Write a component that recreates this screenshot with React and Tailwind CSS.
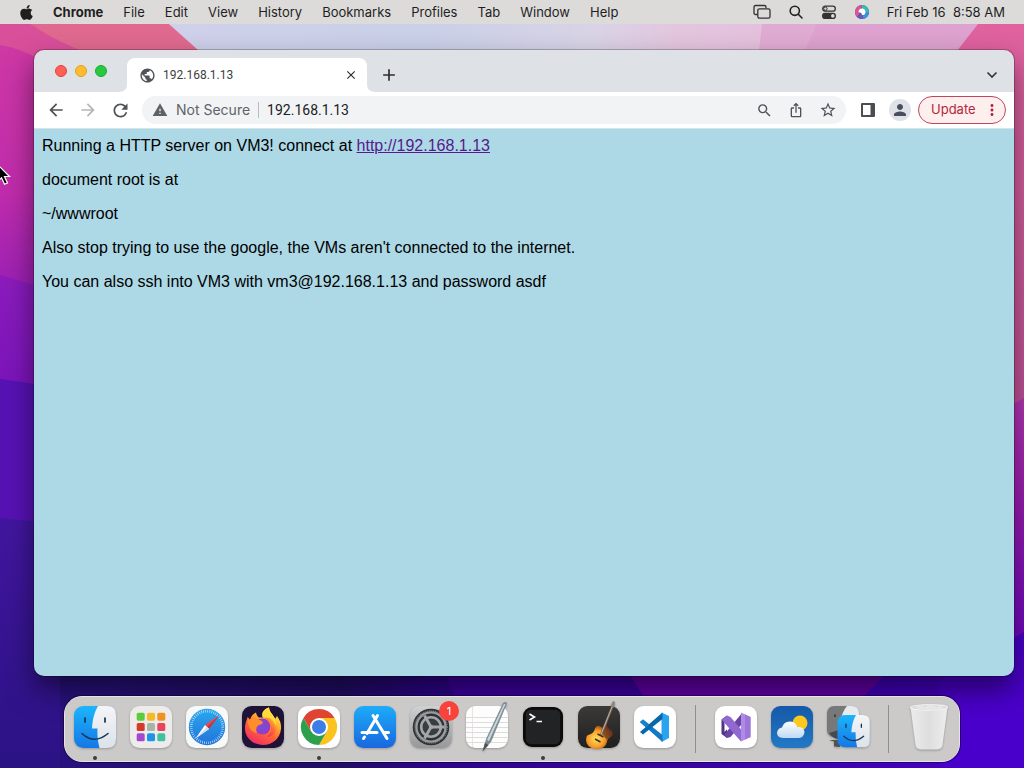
import React from "react";
import { FaApple } from "react-icons/fa";
import {
  MdPublic,
  MdArrowBack,
  MdArrowForward,
  MdRefresh,
  MdWarning,
  MdSearch,
  MdIosShare,
  MdStarBorder,
  MdPerson,
  MdMoreVert,
  MdClose,
  MdAdd,
} from "react-icons/md";

const MENUS = ["File", "Edit", "View", "History", "Bookmarks", "Profiles", "Tab", "Window", "Help"];

function Wallpaper() {
  return (
    <svg className="absolute inset-0 h-full w-full" viewBox="0 0 1024 768" preserveAspectRatio="none" aria-hidden="true">
      <defs>
        <linearGradient id="wBase" x1="0" y1="0" x2="1" y2="0">
          <stop offset="0" stopColor="#2a1284" />
          <stop offset="0.33" stopColor="#210d66" />
          <stop offset="0.42" stopColor="#2d0489" />
          <stop offset="1" stopColor="#4700c8" />
        </linearGradient>
        <linearGradient id="wSky" x1="0" y1="0" x2="1" y2="0">
          <stop offset="0.17" stopColor="#cfd0ea" />
          <stop offset="0.42" stopColor="#c9d0e8" />
          <stop offset="0.58" stopColor="#d9d3e6" />
          <stop offset="0.66" stopColor="#e3c6de" />
          <stop offset="0.8" stopColor="#e5bcdc" />
        </linearGradient>
        <linearGradient id="wLeft" x1="0" y1="40" x2="0" y2="290" gradientUnits="userSpaceOnUse">
          <stop offset="0" stopColor="#cf38a4" />
          <stop offset="0.6" stopColor="#c02cac" />
          <stop offset="1" stopColor="#9a20b4" />
        </linearGradient>
        <linearGradient id="wRight" x1="0" y1="24" x2="0" y2="410" gradientUnits="userSpaceOnUse">
          <stop offset="0" stopColor="#e0629f" />
          <stop offset="0.5" stopColor="#d25c9b" />
          <stop offset="1" stopColor="#c05299" />
        </linearGradient>
        <linearGradient id="wRight2" x1="0" y1="400" x2="0" y2="650" gradientUnits="userSpaceOnUse">
          <stop offset="0" stopColor="#b636b4" />
          <stop offset="0.4" stopColor="#9c1cb4" />
          <stop offset="1" stopColor="#6c06c4" />
        </linearGradient>
        <linearGradient id="wPurple" x1="0" y1="270" x2="0" y2="390" gradientUnits="userSpaceOnUse">
          <stop offset="0" stopColor="#8c1cbc" />
          <stop offset="1" stopColor="#7a14ba" />
        </linearGradient>
        <linearGradient id="wDeep" x1="0" y1="518" x2="0" y2="768" gradientUnits="userSpaceOnUse">
          <stop offset="0" stopColor="#42169f" />
          <stop offset="1" stopColor="#2a1284" />
        </linearGradient>
        <linearGradient id="wPink" x1="0" y1="0" x2="0.2" y2="0">
          <stop offset="0" stopColor="#d5539f" />
          <stop offset="1" stopColor="#e0698f" />
        </linearGradient>
      </defs>
      <rect width="1024" height="768" fill="url(#wBase)" />
      <rect width="1024" height="200" fill="url(#wSky)" />
      <path d="M0 0H142L198 50V200H0Z" fill="url(#wPink)" />
      <path d="M0 24H30Q60 44 96 56V200H0Z" fill="#d94f9a" />
      <path d="M0 45Q20 48 40 60V300H0Z" fill="url(#wLeft)" />
      <path d="M0 275L120 310V400H0Z" fill="url(#wPurple)" />
      <path d="M0 379L120 396V530H0Z" fill="#5712b4" />
      <path d="M0 518L60 524V768H0Z" fill="url(#wDeep)" />
      <path d="M762 24L758 60H900V24Z" fill="#e0abd3" />
      <path d="M817 24L800 60H1024V24Z" fill="#dda2cf" />
      <path d="M978 24L950 60V420H1024V24Z" fill="url(#wRight)" />
      <path d="M950 440L1024 398V660H950Z" fill="url(#wRight2)" />
      <path d="M940 680L1024 632V768H940Z" fill="#4a00cb" />
      <path d="M440 660H620L650 710H460Z" fill="#3d00a0" />
      <path d="M620 660H900L860 700H646Z" fill="#6300a8" />
    </svg>
  );
}

function MenuBar() {
  return (
    <header className="relative z-10 flex h-6 items-center bg-[#dcdbda] pr-[19px] pl-[18px] font-[Inter,sans-serif] text-[13px] leading-4 text-[#1f1f1f]">
      <nav className="flex items-center gap-5" aria-label="Menu bar">
        <button aria-label="Apple menu"><FaApple size={17} className="block" /></button>
        <button className="-ml-0.5 font-bold">Chrome</button>
        {MENUS.map((m) => (
          <button key={m}>{m}</button>
        ))}
      </nav>
      <div className="ml-auto flex items-center gap-[17px]">
        <button aria-label="Screen mirroring">
          <svg className="block" width="18" height="16" viewBox="0 0 18 16" fill="none" stroke="#333" strokeWidth="1.3">
            <path d="M4.500 10.500H2.600Q1 10.500 1 9V3Q1 1.500 2.600 1.500H11.500Q13 1.500 13 3V4.200" />
            <rect x="4.800" y="4.800" width="12.200" height="9.400" rx="1.600" />
          </svg>
        </button>
        <button aria-label="Search">
          <svg className="block" width="16" height="16" viewBox="0 0 16 16" fill="none" stroke="#222" strokeWidth="1.600" strokeLinecap="round">
            <circle cx="6.800" cy="6.800" r="4.600" /><path d="M10.300 10.300L14 14" />
          </svg>
        </button>
        <button aria-label="Control center">
          <svg className="block" width="16" height="16" viewBox="0 0 16 16">
            <rect x="1.700" y="2.200" width="12.600" height="5" rx="2.500" fill="none" stroke="#333" strokeWidth="1.300" />
            <circle cx="4.400" cy="4.700" r="1.700" fill="none" stroke="#333" />
            <rect x="1" y="8.800" width="14" height="6.200" rx="3.100" fill="#333" />
            <circle cx="11.800" cy="11.900" r="1.800" fill="#ddd" />
          </svg>
        </button>
        <button aria-label="Siri">
          <svg className="block" width="16" height="16" viewBox="0 0 16 16">
            <circle cx="8" cy="8" r="7" fill="#3d4a72" />
            <path d="M8 1A7 7 0 0 0 1 8Q1 11 3 13L7 8Z" fill="#d9559b" />
            <path d="M8 1A7 7 0 0 1 15 8L8 9Z" fill="#35bcae" />
            <path d="M15 8A7 7 0 0 1 9 15L8 8Z" fill="#3f8fe0" />
            <path d="M3 13A7 7 0 0 0 9 15L8 8Z" fill="#7055bd" />
            <path d="M4.500 8Q5 4 8.500 4.500Q11.500 5 11.500 8.500Q11 11.500 8 11Q8 8.500 4.500 8Z" fill="#fff" />
          </svg>
        </button>
        <button className="whitespace-pre">Fri Feb 16{"  "}8:58 AM</button>
      </div>
    </header>
  );
}

function TabStrip() {
  return (
    <div className="flex h-[42px] items-end bg-[#dee1e6] pr-3 pl-[21px]">
      <div className="flex gap-2 self-start pt-[15px] pr-5">
        <button aria-label="Close window" className="size-3 rounded-full border border-[#e0443e] bg-[#ff5f57]" />
        <button aria-label="Minimize window" className="size-3 rounded-full border border-[#dea123] bg-[#febc2e]" />
        <button aria-label="Zoom window" className="size-3 rounded-full border border-[#1aab29] bg-[#28c840]" />
      </div>
      <div className="relative flex h-[34px] w-60 items-center rounded-t-lg bg-white px-3">
        <svg className="absolute bottom-0 -left-2 size-2" viewBox="0 0 8 8"><path d="M8 0V8H0Q8 8 8 0Z" fill="#fff" /></svg>
        <svg className="absolute -right-2 bottom-0 size-2" viewBox="0 0 8 8"><path d="M0 0V8H8Q0 8 0 0Z" fill="#fff" /></svg>
        <MdPublic size={17} className="shrink-0 text-[#505357]" />
        <span className="ml-[7px] flex-1 font-[Roboto,sans-serif] text-xs text-[#3c4043]">192.168.1.13</span>
        <button aria-label="Close tab" className="-mr-1 flex size-4 items-center justify-center">
          <MdClose size={14} className="text-[#2c2e31]" />
        </button>
      </div>
      <button aria-label="New tab" className="ml-3 flex h-[34px] w-5 items-center justify-center">
        <MdAdd size={20} className="shrink-0 text-[#2c2e31]" />
      </button>
      <button aria-label="Search tabs" className="ml-auto flex h-[34px] w-5 items-center justify-center">
        <svg width="12" height="8" viewBox="0 0 12 8" fill="none" stroke="#36383b" strokeWidth="1.700"><path d="M1.500 1.500L6 6L10.500 1.500" /></svg>
      </button>
    </div>
  );
}

const slot = "flex h-7 w-8 shrink-0 items-center justify-center";

function Toolbar() {
  return (
    <div className="flex h-[37px] items-center border-b border-[#d5e4ea] bg-white pr-2 pl-1.5 text-[#4f5357]">
      <button aria-label="Back" className={slot}><MdArrowBack size={20} /></button>
      <button aria-label="Forward" className={slot}><MdArrowForward size={20} className="text-[#b4b6b9]" /></button>
      <button aria-label="Reload" className={slot}><MdRefresh size={21} /></button>
      <div className="ml-1.5 flex h-7 flex-1 items-center rounded-full bg-[#f1f3f4] pr-0.5 pl-2.5 text-sm">
        <button className="flex items-center gap-2 text-[#5f6368]">
          <MdWarning size={16} />
          Not Secure
        </button>
        <span className="mr-2 ml-2 h-4 w-px bg-[#b9bcc0]" />
        <input
          aria-label="Address"
          defaultValue="192.168.1.13"
          className="min-w-0 flex-1 bg-transparent font-[Roboto,sans-serif] text-[#202124] outline-none"
        />
        <button aria-label="Zoom" className={slot}><MdSearch size={17} /></button>
        <button aria-label="Share" className={slot}><MdIosShare size={16} /></button>
        <button aria-label="Bookmark" className={slot}><MdStarBorder size={18} /></button>
      </div>
      <button aria-label="Side panel" className={slot + " ml-1.5"}>
        <svg width="14" height="14" viewBox="0 0 14 14"><rect width="14" height="14" rx="1" fill="#4a4d51" /><rect x="2" y="2" width="7.500" height="10" fill="#fff" /></svg>
      </button>
      <button aria-label="Profile" className={slot}>
        <span className="flex size-[22px] items-center justify-center rounded-full bg-[#dee1e6]"><MdPerson size={18} className="text-[#494e5f]" /></span>
      </button>
      <button className="ml-0.5 flex h-7 w-[88px] items-center justify-between rounded-full border border-[#c0455a] bg-[#fdefee] pr-1 pl-3 text-[13px] text-[#b5263a]">
        Update
        <MdMoreVert size={18} />
      </button>
    </div>
  );
}

function BrowserWindow() {
  return (
    <section className="flex flex-1 flex-col overflow-hidden rounded-[10px] font-[Inter,sans-serif] shadow-[0_0_0_1px_rgba(0,0,0,0.22),0_14px_28px_rgba(0,0,0,0.5)]">
      <TabStrip />
      <Toolbar />
      <article className="flex flex-1 flex-col gap-4 bg-[#add8e6] p-2 font-['Liberation_Sans',sans-serif] text-base leading-[18px] text-black">
        <p>
          Running a HTTP server on VM3! connect at{" "}
          <a href="http://192.168.1.13" className="text-[#551a8b] underline">http://192.168.1.13</a>
        </p>
        <p>document root is at</p>
        <p>~/wwwroot</p>
        <p>Also stop trying to use the google, the VMs aren't connected to the internet.</p>
        <p>You can also ssh into VM3 with vm3@192.168.1.13 and password asdf</p>
      </article>
    </section>
  );
}

function Art({ children }) {
  return (
    <svg className="block size-[42px] overflow-visible drop-shadow-[0_1px_1px_rgba(0,0,0,0.25)]" viewBox="0 0 42 42" aria-hidden="true">
      {children}
    </svg>
  );
}

function Grad({ id, from, to }) {
  return (
    <linearGradient id={id} x1="0" y1="0" x2="0" y2="1">
      <stop offset="0" stopColor={from} />
      <stop offset="1" stopColor={to} />
    </linearGradient>
  );
}

function Face() {
  return (
    <g>
      <path d="M24 0C20 7 18.500 14 18 22.500H23.500Q23 33 25.500 42H33Q42 42 42 33V9Q42 0 33 0Z" fill="url(#fWhite)" />
      <path d="M11 12V16M31 12V16" stroke="#1b3246" strokeWidth="1.700" strokeLinecap="round" />
      <path d="M8 27.500Q20 39 34 27.500" fill="none" stroke="#173654" strokeWidth="1.600" strokeLinecap="round" />
    </g>
  );
}

function Finder() {
  return (
    <Art>
      <defs><Grad id="fBlue" from="#1cb5fb" to="#1478e6" /><Grad id="fWhite" from="#f4f5f8" to="#dce2ea" /></defs>
      <rect width="42" height="42" rx="9.500" fill="url(#fBlue)" />
      <Face />
    </Art>
  );
}

const PADS = ["#5ecb3a", "#f6b928", "#f0921f", "#d63a2b", "#a5b5a9", "#e9435f", "#a348cf", "#1f93e8", "#40c1a0"];

function Launchpad() {
  return (
    <Art>
      <rect width="42" height="42" rx="9.500" fill="#eeeceb" />
      {PADS.map((c, i) => (
        <rect key={c} x={6.700 + (i % 3) * 10.300} y={6.700 + Math.floor(i / 3) * 10.300} width="8" height="8" rx="1.600" fill={c} />
      ))}
    </Art>
  );
}

function Safari() {
  return (
    <Art>
      <defs><Grad id="saf" from="#2aa8f0" to="#2273d8" /></defs>
      <rect width="42" height="42" rx="9.500" fill="#f7f8f8" />
      <circle cx="21" cy="21" r="18.200" fill="url(#saf)" />
      <circle cx="21" cy="21" r="15.800" fill="none" stroke="#d9eefb" strokeWidth="2.600" strokeDasharray="0.600 1.468" />
      <path d="M33 9.500L23 23L19 19Z" fill="#ec4a45" />
      <path d="M33 9.500L23 23L21 21Z" fill="#c4363a" />
      <path d="M9.500 32.500L19 19L23 23Z" fill="#fff" />
      <path d="M9.500 32.500L21 21L23 23Z" fill="#d3dce4" />
    </Art>
  );
}

function Firefox() {
  return (
    <Art>
      <defs>
        <linearGradient id="ffx" x1="0.8" y1="0" x2="0.25" y2="1">
          <stop offset="0" stopColor="#fff04a" /><stop offset="0.3" stopColor="#ffbd2e" />
          <stop offset="0.6" stopColor="#ff6636" /><stop offset="1" stopColor="#ef2a68" />
        </linearGradient>
        <radialGradient id="ffp"><stop offset="0" stopColor="#754cdb" /><stop offset="1" stopColor="#993cc4" /></radialGradient>
      </defs>
      <rect width="42" height="42" rx="9.500" fill="#1e1236" />
      <path d="M21 39C11 39 3 32 3 22.500C3 17 5 14 5.500 11C7 12 7.500 13 8 14C9 10 11 8 14 6.500C14.500 9 15.500 10.500 17 11.500H21C19 7 22 3 27 1.500C27 6 31 8 33 13L35 10C38 14 39.500 18 39 23C38 33 30 39 21 39Z" fill="url(#ffx)" />
      <circle cx="20.500" cy="20.500" r="8" fill="url(#ffp)" />
      <path d="M5.500 15Q10 11 16 13.500Q20 14 21 17Q18 19 16 19.500Q13 22 15 27Q8 27 5.500 15Z" fill="#ff8d2c" />
      <path d="M27 1.500C27 8 37 11 34 24Q32 31 25 31Q31 25 28 18Q26 13 21 11.500C19 7 22 3 27 1.500Z" fill="url(#ffx)" />
      <path d="M27 1.500C27 8 35 10 34 20Q31 13 27 12Q24 11.500 21 11.500C19 7 22 3 27 1.500Z" fill="#ffdc3c" />
    </Art>
  );
}

function Chrome() {
  return (
    <Art>
      <rect width="42" height="42" rx="9.500" fill="#fff" />
      <path d="M5.400 12A18 18 0 0 1 36.600 12H21L13.200 25.500Z" fill="#df4332" />
      <path d="M36.600 12A18 18 0 0 1 21 39L28.800 25.500L21 12Z" fill="#fcc31e" />
      <path d="M21 39A18 18 0 0 1 5.400 12L13.200 25.500H28.800Z" fill="#2da04c" />
      <circle cx="21" cy="21" r="9" fill="#fff" />
      <circle cx="21" cy="21" r="7" fill="#3c7de6" />
    </Art>
  );
}

function AppStore() {
  return (
    <Art>
      <defs><Grad id="aps" from="#1cacf9" to="#1a67df" /></defs>
      <rect width="42" height="42" rx="9.500" fill="url(#aps)" />
      <g stroke="#fff" strokeWidth="3" strokeLinecap="round">
        <path d="M23.500 9.500L13 27.500M19 9.500L33 32.500M8 26.500H23M30 26.500H34.500M10.500 31L9.500 32.500" />
      </g>
    </Art>
  );
}

function Settings() {
  return (
    <Art>
      <defs><Grad id="set" from="#cdd2d4" to="#96989a" /></defs>
      <rect width="42" height="42" rx="9.500" fill="url(#set)" />
      <circle cx="21" cy="21" r="18.300" fill="#2f3234" />
      <circle cx="21" cy="21" r="14.600" fill="none" stroke="#989c9e" strokeWidth="2.400" />
      <circle cx="21" cy="21" r="16.200" fill="none" stroke="#7e8284" strokeWidth="1.200" strokeDasharray="1 1" />
      <circle cx="21" cy="21" r="9.800" fill="#3a3d3f" stroke="#a3a7a9" strokeWidth="2.600" />
      <path d="M21 21L14.500 9.500M21 21H34.500M21 21L14.500 32.500" stroke="#a3a7a9" strokeWidth="2.800" />
      <circle cx="21" cy="21" r="2.200" fill="#a3a7a9" />
    </Art>
  );
}

function TextEdit() {
  return (
    <Art>
      <rect width="42" height="42" rx="9.500" fill="#fdfdfd" />
      <path d="M0 11.500H42M0 16.500H42M0 21.500H42M0 26.500H42M0 31.500H42M1 36.500H41" stroke="#d3d3d6" strokeWidth="0.800" />
      <path d="M6.500 1V41" stroke="#e4d5d0" strokeWidth="0.700" />
      <path d="M37 -3Q40 -5 41 -2.500L25 36L16.500 45.500L20 33Z" fill="#7d8d94" />
      <path d="M38 -2L39.500 -2L23 35L21 34Z" fill="#ccd7da" />
      <path d="M19 37L22.500 39L16.500 45.500Z" fill="#4d5254" />
    </Art>
  );
}

function Terminal() {
  return (
    <Art>
      <rect x="1" y="1" width="40" height="40" rx="9" fill="#0b0b0c" />
      <rect x="3.800" y="3.800" width="34.400" height="34.400" rx="5" fill="#222324" />
      <path d="M7.500 8L12.500 11L7.500 14M14.500 15.500H20" fill="none" stroke="#fff" strokeWidth="1.600" />
    </Art>
  );
}

function GarageBand() {
  return (
    <Art>
      <defs>
        <radialGradient id="gb" cx="0.38" cy="0.6" r="0.6"><stop offset="0" stopColor="#ffe25a" /><stop offset="0.55" stopColor="#f59a26" /><stop offset="1" stopColor="#7a2a12" /></radialGradient>
        <Grad id="gbt" from="#3b3a39" to="#201f1f" />
      </defs>
      <rect width="42" height="42" rx="9.500" fill="url(#gbt)" />
      <path d="M10 29Q15 28 16.500 24Q18 19 21.500 20L25 22Q26 17 29 17.500Q28.500 21 31 23Q36 26 34 30Q29 32 29 36Q27 44 17 43Q8 41 8 34Q8 30 10 29Z" fill="url(#gb)" />
      <path d="M25 22Q26 17 29 17.500Q28.500 21 31 23Q36 26 34 30Q30 31 29 34L25 29Z" fill="#6b3a20" opacity="0.75" />
      <path d="M35 -1L23 29" stroke="#6e5c4f" strokeWidth="2.400" />
      <path d="M34.800 -1L20 36" stroke="#d8cdbb" strokeWidth="0.800" />
      <path d="M33 -1L35 -5L37 -4L36.500 1L34 2Z" fill="#92867c" />
      <path d="M19.500 28L25.500 31M17 33L22.500 36" stroke="#4b2a16" strokeWidth="1.500" />
    </Art>
  );
}

function VSCode() {
  return (
    <Art>
      <rect width="42" height="42" rx="9.500" fill="#fff" />
      <path d="M27.500 6.500L35 10V32L27.500 36Z" fill="#2ba4ef" />
      <path d="M6 16L9 13.500L28.500 29V36Z" fill="#1379c4" />
      <path d="M6 26L9 28.500L28.500 13V6.500Z" fill="#0868ac" />
      <path d="M6 16L9 13.500L15 18.300L12 21.500Z" fill="#1284cf" />
    </Art>
  );
}

function VisualStudio() {
  return (
    <Art>
      <rect width="42" height="42" rx="9.500" fill="#fff" />
      <path d="M6.500 13.500L12 9.500V32L6.500 28Z" fill="#52337f" />
      <path d="M9.500 16V26L14 21Z" fill="#fff" />
      <path d="M9 29L12 32L15.500 31L27 18V7Z" fill="#6b45a5" />
      <path d="M6.500 13.500L12 9.500L15.500 11L30 28L26 35.500Z" fill="#9068d0" />
      <path d="M26 6.500L35.500 11V31L26 35.500V27.500V14Z" fill="#ae8be4" />
      <path d="M30 8.500L35.500 11V31L30 33.500Z" fill="#9c76d8" />
    </Art>
  );
}

function Weather() {
  return (
    <Art>
      <defs><Grad id="wea" from="#1559a8" to="#2379c6" /><Grad id="cld" from="#ffffff" to="#bedaf5" /></defs>
      <rect width="42" height="42" rx="9.500" fill="url(#wea)" />
      <circle cx="29" cy="17" r="7.500" fill="#fcc81e" />
      <path d="M12 32Q6 31.500 6 26.500Q7 22 11 21.500Q13 15 19.500 15.500Q25 16 26 21Q33 20.500 33.500 26Q33 31.500 28 32Z" fill="url(#cld)" />
    </Art>
  );
}

function FinderPair() {
  return (
    <Art>
      <rect width="31" height="31" rx="7" fill="#77787a" />
      <path d="M20 0Q15 6 14 14H32V7Q31 0 25 0Z" fill="#e8eaee" />
      <path d="M8 8.500V11" stroke="#2b2b2c" strokeWidth="1.400" />
      <path d="M2 34L7 35.500V40.500L13 41V34Z" fill="#515254" />
      <path d="M2 27Q6 33 12 33V24Z" fill="#48494b" />
      <g transform="translate(10.500 9) scale(0.77)">
        <rect width="42" height="42" rx="9.500" fill="url(#fBlue)" />
        <Face />
      </g>
    </Art>
  );
}

function Trash() {
  return (
    <Art>
      <defs><linearGradient id="tr"><stop offset="0" stopColor="#ececec" /><stop offset="0.5" stopColor="#dededf" /><stop offset="1" stopColor="#ededed" /></linearGradient></defs>
      <path d="M2.500 1L7.500 39Q8 43 13 43.500H29Q34 43 34.500 39L39.500 1Z" fill="url(#tr)" />
      <ellipse cx="21" cy="1.500" rx="18.500" ry="2.800" fill="#d9d9d9" stroke="#f0f0f0" strokeWidth="1.200" />
      <path d="M7 2L12 -1L17 1L22 -2L28 1L33 -0.500L36 2.500Q22 6 7 2Z" fill="#e6e6e6" />
    </Art>
  );
}

const APPS = [
  { name: "Finder", Icon: Finder, running: true },
  { name: "Launchpad", Icon: Launchpad },
  { name: "Safari", Icon: Safari },
  { name: "Firefox", Icon: Firefox },
  { name: "Google Chrome", Icon: Chrome, running: true },
  { name: "App Store", Icon: AppStore },
  { name: "System Preferences", Icon: Settings, badge: "1" },
  { name: "TextEdit", Icon: TextEdit },
  { name: "Terminal", Icon: Terminal, running: true },
  { name: "GarageBand", Icon: GarageBand },
  { name: "Visual Studio Code", Icon: VSCode },
];
const RECENTS = [
  { name: "Visual Studio", Icon: VisualStudio },
  { name: "Weather", Icon: Weather },
  { name: "Migration Assistant", Icon: FinderPair },
];

function DockItem({ name, Icon, running, badge }) {
  return (
    <button aria-label={name} className="relative flex h-full w-14 shrink-0 justify-center pt-[9px]">
      <Icon />
      {badge && (
        <span className="absolute top-1 right-0 flex size-5 items-center justify-center rounded-full bg-[#f8433d] text-[11px] text-white">
          {badge}
        </span>
      )}
      {running && <span className="absolute bottom-px left-[26px] size-1 rounded-full bg-[#3c3c3c]" />}
    </button>
  );
}

function Divider() {
  return <span className="mx-3 h-12 w-px bg-[#8f8f8f]" />;
}

function Dock() {
  return (
    <footer className="relative mx-auto mt-5 mb-1.5 flex h-[66px] items-center rounded-[18px] border border-[#e6e3ea] bg-[#cbcac9] px-0.5 font-[Inter,sans-serif] shadow-[0_0_0_1px_rgba(0,0,0,0.4)]">
      {APPS.map((a) => <DockItem key={a.name} {...a} />)}
      <Divider />
      {RECENTS.map((a) => <DockItem key={a.name} {...a} />)}
      <Divider />
      <DockItem name="Trash" Icon={Trash} />
    </footer>
  );
}

export default function App() {
  return (
    <div className="relative flex min-h-screen flex-col overflow-hidden bg-[#2a1284]">
      <Wallpaper />
      <MenuBar />
      <main className="relative flex flex-1 flex-col pt-[26px] pr-2.5 pl-[34px]">
        <BrowserWindow />
      </main>
      <Dock />
      <svg className="absolute top-[165px] left-0" width="12" height="22" viewBox="0 0 12 22" aria-hidden="true">
        <path d="M-3 -1L9.500 11.500H4.500L7.500 18L4.500 19.300L1.500 12.800L-3 17Z" fill="#000" stroke="#fff" strokeWidth="1.200" />
      </svg>
    </div>
  );
}
